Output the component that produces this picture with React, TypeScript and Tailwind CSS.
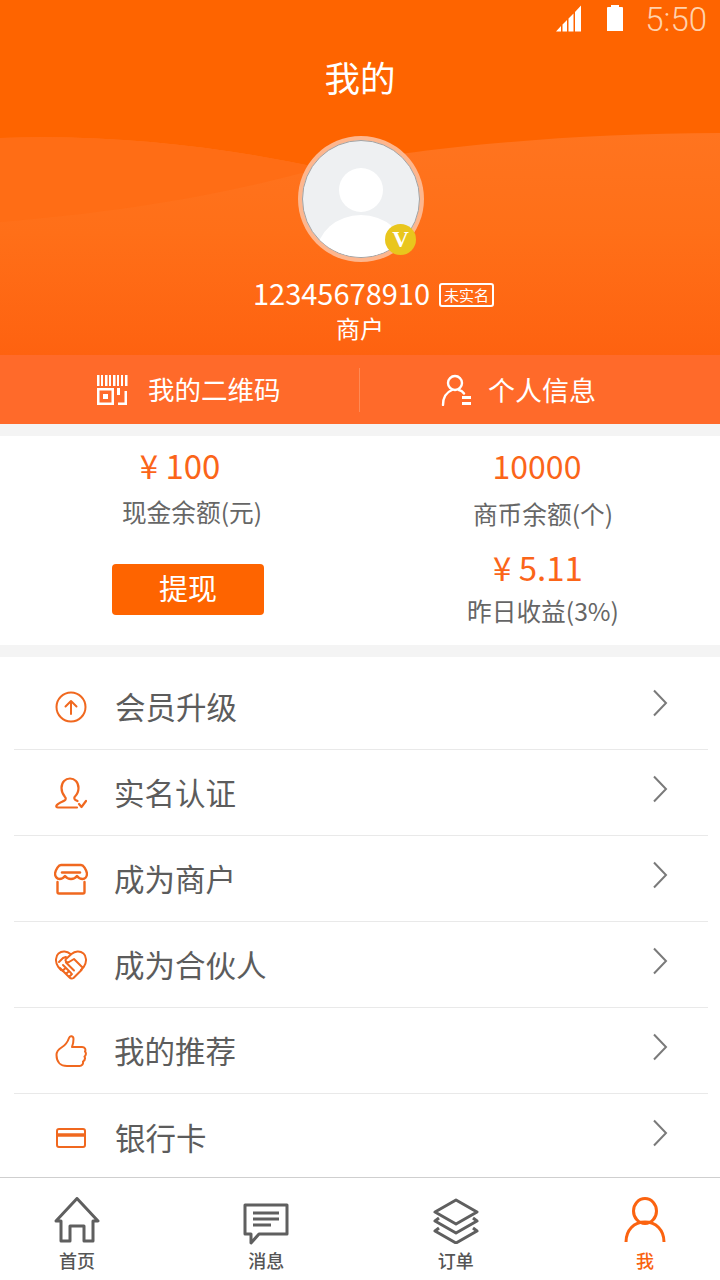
import type { ReactNode } from 'react';

const orange = '#f0681f';

const UpgradeIcon = () => (
  <svg width="32" height="32" viewBox="0 0 32 32" fill="none" stroke={orange} strokeWidth="2" strokeLinecap="round" strokeLinejoin="round">
    <circle cx="16" cy="16" r="14.500" />
    <path d="M16 23V10M10.500 15.500 16 10l5.500 5.500" />
  </svg>
);

const VerifyIcon = () => (
  <svg width="32" height="32" viewBox="0 0 32 32" fill="none" stroke={orange} strokeWidth="2.200" strokeLinecap="round" strokeLinejoin="round">
    <path d="M22 30.500H3c-1.500 0-2-1-1.500-2 1-2 5-3.500 8-5 1.500-.8 1.500-2.500.5-3.500C7.500 17 6.500 14 6.500 11c0-6 4-9.500 8.500-9.500S23.500 5 23.500 11c0 3-1 6-3.500 8.500-1 1-1 2.500.5 3.500l2 1" />
    <path d="m24 27 2.500 3 4.500-6" />
  </svg>
);

const StoreIcon = () => (
  <svg width="34" height="32" viewBox="0 0 34 32" fill="none" stroke={orange} strokeWidth="2.400" strokeLinecap="round" strokeLinejoin="round">
    <path d="M7 2h20c2.500 0 5 4 6 8.500 0 3-2 5.500-4.500 5.500-2 0-4-1-5.500-3-1.500 2-4 3-6 3s-4.500-1-6-3c-1.500 2-3.500 3-5.500 3C3 16 1 13.500 1 10.500 2 6 4.500 2 7 2Z" />
    <path d="M8 9.500h18" />
    <path d="M3.500 19v10c0 1 .5 1.500 1.500 1.500h24c1 0 1.500-.5 1.500-1.500V19" />
  </svg>
);

const PartnerIcon = () => (
  <svg width="32" height="32" viewBox="0 0 32 32" fill="none" stroke={orange} strokeWidth="2" strokeLinecap="round" strokeLinejoin="round">
    <path d="M6 21 3 17.500C0 13 .5 7 3.500 4.500 7 1.500 12 2 15.500 5" />
    <path d="M26 21l3-3.500c3-4.500 2.500-10.500-.5-13C25 1.500 20 2 16.500 5L11 10c-1.500 2 1 4 3 3l5-3 8 8" />
    <path d="M4 13l4-4 3-1M5 19l9 9c1.500 1.500 3 2 4.500 1l8-8M8 16l8 8M11 13.500l8 8M7.500 22l3-3M11 25l3-3M14 28l3-3" />
  </svg>
);

const ThumbIcon = () => (
  <svg width="32" height="32" viewBox="0 0 32 32" fill="none" stroke={orange} strokeWidth="2" strokeLinecap="round" strokeLinejoin="round">
    <path d="M1.500 20c0-4 2.500-6 5-7.500 3.500-2 6-5 7.500-9.500C15 0 18.500 1 18.500 4c0 3-.5 5.500-1.500 8h10c3 0 4 2.500 3 4.500 1.500 1.500 1 4-.5 5 1 2 0 4-1.500 5 .5 2.500-1 4.500-3.500 4.500H12C6 31 1.500 27.500 1.500 20Z" />
  </svg>
);

const CardIcon = () => (
  <svg width="30" height="22" viewBox="0 0 30 22" fill="none" stroke={orange} strokeWidth="2" className="mt-[2px]">
    <rect x="1" y="2" width="28" height="18" rx="2" />
    <path d="M1 8h28" strokeWidth="3.500" />
  </svg>
);

const Chevron = () => (
  <svg width="16" height="28" viewBox="0 0 16 28" fill="none" stroke="#7a7a7a" strokeWidth="2" className="mb-2">
    <path d="m2 1.500 12 12.500L2 26.500" />
  </svg>
);

const HomeIcon = () => (
  <svg width="46" height="46" viewBox="0 0 46 46" fill="none" stroke="#5f5f5f" strokeWidth="3" strokeLinejoin="round">
    <path d="M2 24 23 1.500 44 24h-5v20H30V29H16v15H7V24Z" />
  </svg>
);

const MessageIcon = () => (
  <svg width="46" height="42" viewBox="0 0 46 42" fill="none" stroke="#5f5f5f" strokeWidth="3" strokeLinejoin="round" className="-mb-[2px]">
    <path d="M2 2h42v29H16L8 40v-9H2Z" />
    <path d="M10 10h26M10 16h26M10 22h18" />
  </svg>
);

const LayersIcon = () => (
  <svg width="46" height="46" viewBox="0 0 46 46" fill="none" stroke="#5f5f5f" strokeWidth="3" strokeLinejoin="round" className="-mb-[1px]">
    <path d="M23 2 44 14 23 26 2 14Z" />
    <path d="m6 20-4 3 21 12 21-12-4-3" />
    <path d="m6 30-4 3 21 12 21-12-4-3" />
  </svg>
);

const MeIcon = () => (
  <svg width="42" height="46" viewBox="0 0 42 46" fill="none" stroke="#fb6310" strokeWidth="3">
    <ellipse cx="21" cy="14" rx="11.500" ry="12.500" />
    <path d="M2 45c0-12 8-20 19-20s19 8 19 20" />
  </svg>
);

const Signal = () => (
  <svg width="28" height="28" viewBox="0 0 28 28" fill="white">
    <path d="M1 27.500 6 22v5.500ZM7.500 20.500 12 16v11.500H7.500ZM13.500 14.500 18.500 9.500v18h-5ZM20 8l6-6.500v26h-6Z" />
  </svg>
);

const Battery = () => (
  <svg width="16" height="26" viewBox="0 0 16 26" fill="white">
    <path d="M4 0h8v2h3a1 1 0 0 1 1 1v23H0V3a1 1 0 0 1 1-1h3Z" />
  </svg>
);

const QrIcon = () => (
  <svg width="32" height="32" viewBox="0 0 32 32" fill="white">
    <path d="M1 1h2.500v11H1ZM5 1h2v11H5ZM9 1h2.500v11H9ZM13 1h2v11h-2ZM17 1h2.500v11H17ZM21 1h2v11h-2ZM25 1h2v11h-2ZM29 1h2.500v11H29Z" />
    <path d="M1 14h17v17H1Zm2.500 2.500v12h12v-12Z" fillRule="evenodd" />
    <path d="M7 20h5v5H7ZM21 14h3v7h-3ZM28.500 17H31v14h-9v-2.500h6.500Z" />
  </svg>
);

const ProfileIcon = () => (
  <svg width="32" height="32" viewBox="0 0 32 32" fill="none" stroke="white" strokeWidth="2.400" strokeLinecap="round">
    <circle cx="14" cy="9" r="7" />
    <path d="M2 31c0-8 4-13 9-15M18 16c2 .5 4 2 5 3.500" />
    <path d="M21 23.500h9M21 29.500h9" strokeLinecap="butt" strokeWidth="3" />
  </svg>
);

const Avatar = () => (
  <div className="relative h-[126px] w-[126px] rounded-full bg-[#fdb68e] p-[4px]">
    <div className="h-full w-full overflow-hidden rounded-full border border-[#a3a3a3] bg-[#eef0f2]">
      <svg width="116" height="116" viewBox="0 0 116 116" fill="white">
        <circle cx="58" cy="49" r="22" />
        <ellipse cx="58" cy="112" rx="44" ry="38" />
      </svg>
    </div>
    <div className="absolute left-[87px] top-[88px] flex h-[31px] w-[31px] items-center justify-center rounded-full bg-[#e9c61d] text-[23px] font-bold leading-none text-white [font-family:'Liberation_Serif',serif]">
      V
    </div>
  </div>
);

const rows: { icon: ReactNode; label: string; indent: string; border: boolean }[] = [
  { icon: <UpgradeIcon />, label: '会员升级', indent: 'pl-[27px]', border: true },
  { icon: <VerifyIcon />, label: '实名认证', indent: 'pl-[26px]', border: true },
  { icon: <StoreIcon />, label: '成为商户', indent: 'pl-[26px]', border: true },
  { icon: <PartnerIcon />, label: '成为合伙人', indent: 'pl-[26px]', border: true },
  { icon: <ThumbIcon />, label: '我的推荐', indent: 'pl-[26px]', border: true },
  { icon: <CardIcon />, label: '银行卡', indent: 'pl-[27px]', border: false },
];

const MenuRow = ({ icon, label, indent, border }: (typeof rows)[number]) => (
  <div className={`ml-[14px] mr-[12px] flex h-[86px] items-center border-[#e9e9e9] pl-[40px] pr-[40px] ${border ? 'border-b' : ''}`}>
    <div className="flex w-[34px] shrink-0 justify-center">{icon}</div>
    <span className={`flex-1 text-[30.500px] leading-none text-[#5c5c5c] ${indent}`}>{label}</span>
    <Chevron />
  </div>
);

const TabItem = ({ icon, label, active }: { icon: ReactNode; label: string; active?: boolean }) => (
  <div className="flex w-[90px] flex-col items-center">
    <div className="flex h-[48px] items-end justify-center">{icon}</div>
    <span className={`mt-[5px] text-[18px] font-medium leading-[24px] ${active ? 'text-[#f9620f]' : 'text-[#555555]'}`}>{label}</span>
  </div>
);

export default function App() {
  return (
    <div className="flex h-[1280px] w-[720px] flex-col overflow-hidden bg-[#f4f4f4] [font-family:'Noto_Sans_CJK_SC','Noto_Sans',sans-serif]">
      <div className="relative h-[355px] shrink-0 bg-[#fe6400]">
        <svg className="absolute inset-0" width="720" height="355" viewBox="0 0 720 355">
          <defs>
            <linearGradient id="wave" x1="0" y1="0" x2="0" y2="1">
              <stop offset="0" stopColor="#ff741f" />
              <stop offset="0.45" stopColor="#ff6f18" />
              <stop offset="1" stopColor="#fe6210" />
            </linearGradient>
          </defs>
          <path d="M0 138C110 134 220 146 320 168C400 150 560 133 720 133V355H0Z" fill="url(#wave)" />
          <path d="M0 138C110 134 220 146 320 168C220 196 120 212 0 222Z" fill="#ff6d15" />
        </svg>
        <div className="relative flex h-full flex-col items-center text-white">
          <div className="flex h-[38px] w-full items-center justify-end gap-[24px] pb-[2px] pr-[13px]">
            <Signal />
            <Battery />
            <span className="-ml-[2px] mt-[2px] text-[33px] font-light leading-none text-[#ffd2ae] [font-family:Roboto,sans-serif]">5:50</span>
          </div>
          <h1 className="mt-[15px] text-[35.500px] font-normal leading-[48px]">我的</h1>
          <div className="mt-[35px] pl-[2px]">
            <Avatar />
          </div>
          <div className="mt-[13px] flex h-[34px] items-center pl-[27px]">
            <span className="text-[29px] font-normal leading-none">12345678910</span>
            <span className="ml-[9px] mt-[5px] flex h-[24px] w-[55px] items-center justify-center rounded-[3px] border-2 border-white text-[15px] leading-none">未实名</span>
          </div>
          <span className="mt-[4px] text-[24px] leading-[30px]">商户</span>
        </div>
      </div>

      <div className="flex h-[69px] shrink-0 items-center bg-[#ff6a2a] text-white">
        <div className="flex w-[359px] items-center pl-[96px]">
          <QrIcon />
          <span className="ml-[20px] text-[26.500px] leading-none">我的二维码</span>
        </div>
        <div className="h-[44px] w-px bg-[#ff8a55]" />
        <div className="flex flex-1 items-center pl-[81px]">
          <ProfileIcon />
          <span className="ml-[15px] text-[27px] leading-none">个人信息</span>
        </div>
      </div>

      <div className="mt-[12px] grid h-[209px] shrink-0 grid-cols-2 bg-white text-center">
        <div className="flex flex-col items-center pt-[9px]">
          <span className="text-[33px] leading-[40px] text-[#fb6519]">¥ 100</span>
          <span className="ml-[24px] mt-[9px] text-[24.700px] leading-[34px] text-[#666666]">现金余额(元)</span>
          <button className="ml-[16px] mt-[36px] h-[51px] w-[152px] rounded-[4px] bg-[#fe6400] pb-[4px] text-[29px] leading-none text-white">提现</button>
        </div>
        <div className="flex flex-col items-center pt-[9px]">
          <span className="mr-[6px] text-[32px] leading-[40px] text-[#fb6519]">10000</span>
          <span className="ml-[6px] mt-[11px] text-[24.700px] leading-[34px] text-[#666666]">商币余额(个)</span>
          <span className="mr-[4px] mt-[17px] text-[33px] leading-[40px] text-[#fb6519]">¥ 5.11</span>
          <span className="ml-[6px] mt-[6px] text-[24.700px] leading-[34px] text-[#666666]">昨日收益(3%)</span>
        </div>
      </div>

      <div className="mt-[12px] flex-1 overflow-hidden bg-white pt-[7px]">
        {rows.map((row) => (
          <MenuRow key={row.label} {...row} />
        ))}
      </div>

      <div className="flex h-[103px] shrink-0 justify-between border-t border-[#cfcfcf] bg-white pl-[32px] pr-[30px] pt-[17px]">
        <TabItem icon={<HomeIcon />} label="首页" />
        <TabItem icon={<MessageIcon />} label="消息" />
        <TabItem icon={<LayersIcon />} label="订单" />
        <TabItem icon={<MeIcon />} label="我" active />
      </div>
    </div>
  );
}
